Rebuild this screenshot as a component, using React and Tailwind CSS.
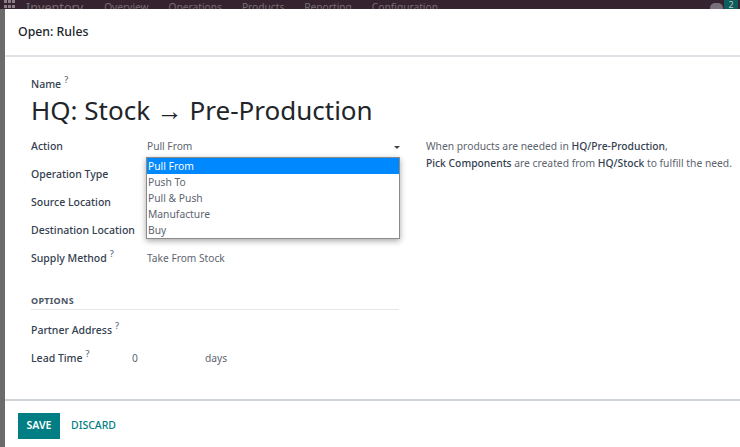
function Help() {
  return <sup className="relative top-[-5px] ml-[3px] text-[9px] text-[#5f6b7a]">?</sup>;
}

function Row({ label, help, children }) {
  return (
    <div className="flex h-[28px] items-center">
      <div className="w-[116px] shrink-0 whitespace-nowrap text-[10.5px] font-medium text-[#33404f]">
        {label}
        {help && <Help />}
      </div>
      <div className="text-[10.2px] text-[#5d6470]">{children}</div>
    </div>
  );
}

export default function App() {
  return (
    <div className="relative h-[447px] w-[740px] overflow-hidden bg-[#6b6b6b] font-['Noto_Sans',sans-serif]">
      <nav className="flex h-[9px] overflow-hidden bg-[#35242f] text-[#7a6d75]">
        <div className="ml-[4px] grid h-[9px] grid-cols-3 gap-[1px]">
          {Array.from({ length: 6 }).map((_, i) => (
            <span key={i} className="h-[3px] w-[3px] bg-[#8a7f86]" />
          ))}
        </div>
        <div className="ml-[11px] flex items-start gap-[20px] whitespace-nowrap text-[10.2px] leading-[15px]">
          <span className="mr-[1px] text-[12.6px]">Inventory</span>
          <span>Overview</span>
          <span>Operations</span>
          <span>Products</span>
          <span>Reporting</span>
          <span>Configuration</span>
        </div>
        <div className="ml-auto flex h-[9px] items-start gap-[1px] pr-[2px]">
          <span className="mt-[3px] h-[10px] w-[13px] rounded-full bg-[#77707a]" />
          <span className="h-[9px] w-[14px] bg-[#0f5c5c] text-center text-[9px] leading-[9px] text-[#b9c7c7]">2</span>
        </div>
      </nav>

      <div className="ml-[5px] flex h-[438px] flex-col bg-white">
        <header className="flex h-[48px] shrink-0 items-center border-b-2 border-[#dee2e6] pl-[13px] text-[12.3px] font-medium text-[#212529]">
          Open: Rules
        </header>

        <main className="relative flex-1 pl-[26px] pt-[19px]">
          <div className="text-[10.5px] font-medium leading-[17px] text-[#33404f]">
            Name
            <Help />
          </div>
          <h1 className="mt-[-1px] text-[26px] font-normal leading-[36px] text-[#212529]">HQ: Stock → Pre-Production</h1>

          <div className="mt-[5px] flex">
            <div className="w-[368px]">
              <Row label="Action">Pull From</Row>
              <Row label="Operation Type" />
              <Row label="Source Location" />
              <Row label="Destination Location" />
              <Row label="Supply Method" help>
                Take From Stock
              </Row>
              <div className="mt-[21px] border-b border-[#e5e7eb] pb-[1px] text-[9px] font-bold leading-[14px] tracking-[0.3px] text-[#4b5563]">
                OPTIONS
              </div>
              <div className="mt-[7px]">
                <Row label="Partner Address" help />
                <div className="flex h-[28px] items-center">
                  <div className="w-[101px] shrink-0 text-[10.5px] font-medium text-[#33404f]">
                    Lead Time
                    <Help />
                  </div>
                  <span className="w-[73px] text-[10.2px] text-[#5d6470]">0</span>
                  <span className="text-[10.2px] text-[#5d6470]">days</span>
                </div>
              </div>
            </div>
            <p className="ml-[27px] whitespace-nowrap pt-[5px] text-[10.3px] leading-[16.5px] text-[#5d6470]">
              When products are needed in <b className="font-medium text-[#33404f]">HQ/Pre-Production</b>,
              <br />
              <b className="font-medium text-[#33404f]">Pick Components</b> are created from{" "}
              <b className="font-medium text-[#33404f]">HQ/Stock</b> to fulfill the need.
            </p>
          </div>

          <span className="absolute left-[389px] top-[89px] h-0 w-0 border-x-[3px] border-t-[3px] border-x-transparent border-t-[#444]" />
          <ul className="absolute left-[141px] top-[100px] w-[254px] border border-[#8a8a8a] bg-white text-[10.3px] leading-[16px] text-[#5d6470] shadow-[0_2px_6px_rgba(0,0,0,0.35)]">
            <li className="bg-[#0088ff] pl-[1px] text-white">Pull From</li>
            <li className="pl-[1px]">Push To</li>
            <li className="pl-[1px]">Pull &amp; Push</li>
            <li className="pl-[1px]">Manufacture</li>
            <li className="pl-[1px]">Buy</li>
          </ul>
        </main>

        <footer className="flex h-[48px] shrink-0 items-center border-t-2 border-[#ced4da] pl-[13px] pt-[4px]">
          <button className="h-[26px] w-[42px] border border-[#017e84] bg-[#017e84] text-[10.5px] font-semibold text-white">
            SAVE
          </button>
          <button className="ml-[11px] text-[10.5px] font-medium text-[#017e84]">DISCARD</button>
        </footer>
      </div>
    </div>
  );
}
